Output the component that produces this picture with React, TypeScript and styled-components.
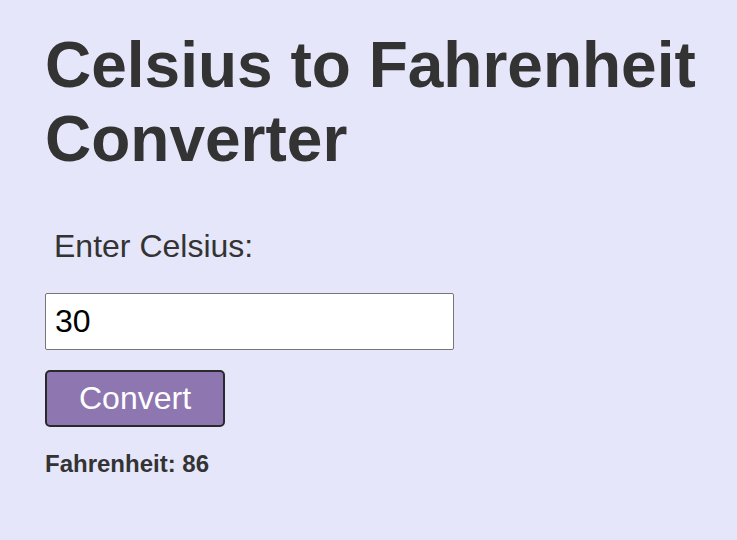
import React, { useState } from "react";
import styled, { createGlobalStyle } from "styled-components";

const Global = createGlobalStyle`
  html, body { margin: 0; padding: 0; background: #e6e6fa; }
  body { font-family: "Liberation Sans", Arial, sans-serif; color: #333; }
`;

const Page = styled.main`
  padding: 28px 0 0 45px;
  display: flex;
  flex-direction: column;
  align-items: flex-start;
`;

const Title = styled.h1`
  font-size: 64px;
  font-weight: bold;
  line-height: 74px;
  margin: 0 0 52px;
  color: #333;
`;

const Label = styled.label`
  font-size: 32px;
  margin: 0 0 28px 9px;
  color: #333;
`;

const Input = styled.input`
  box-sizing: border-box;
  width: 409px;
  height: 57px;
  font-family: "Liberation Sans", Arial, sans-serif;
  font-size: 32px;
  padding: 0 9px;
  border: 1px solid #767676;
  border-radius: 2px;
  background: #fff;
  color: #000;
  margin: 0 0 20px;
`;

const Button = styled.button`
  box-sizing: border-box;
  width: 180px;
  height: 57px;
  font-family: "Liberation Sans", Arial, sans-serif;
  font-size: 32px;
  color: #fff;
  background: #8e76b0;
  border: 2px solid #2a2a2a;
  border-radius: 5px;
  margin: 0 0 23px;
  cursor: pointer;
`;

const Result = styled.p`
  font-size: 24px;
  font-weight: bold;
  margin: 0;
  color: #333;
`;

export default function App() {
  const [c, setC] = useState("30");
  const [f, setF] = useState<number>(86);
  return (
    <>
      <Global />
      <Page>
        <Title>Celsius to Fahrenheit Converter</Title>
        <Label htmlFor="celsius">Enter Celsius:</Label>
        <Input id="celsius" value={c} onChange={(e) => setC(e.target.value)} />
        <Button onClick={() => setF((parseFloat(c) * 9) / 5 + 32)}>Convert</Button>
        <Result>Fahrenheit: {f}</Result>
      </Page>
    </>
  );
}
